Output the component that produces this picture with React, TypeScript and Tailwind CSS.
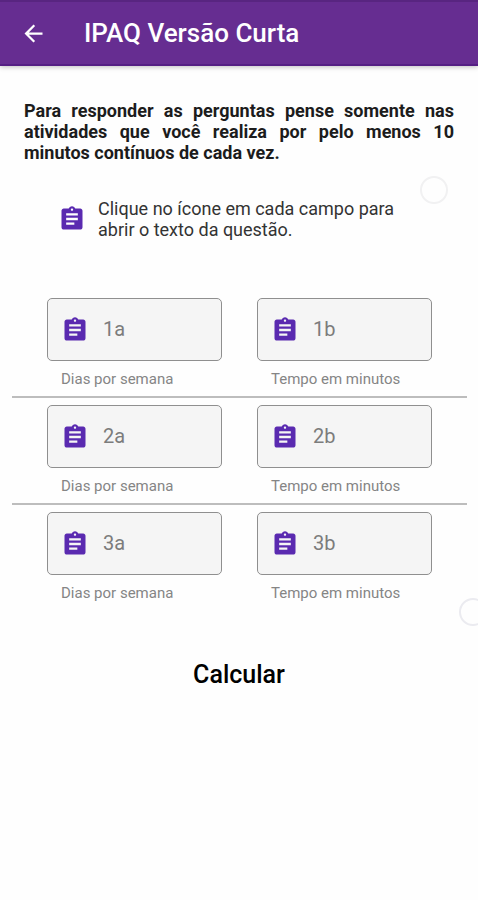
import { MdArrowBack, MdAssignment } from 'react-icons/md';

const questions = ['1', '2', '3'];

function Field({ id, label, helper }: { id: string; label: string; helper: string }) {
  return (
    <div className="min-w-0">
      <div className="flex h-[63px] items-center rounded-[5px] border border-[#8f8f8f] bg-[#f5f5f5] pl-[13px]">
        <button type="button" aria-label={`Abrir questão ${label}`} className="shrink-0 text-[#5a2ab0]">
          <MdAssignment size={28} />
        </button>
        <input
          id={id}
          type="text"
          inputMode="numeric"
          aria-label={label}
          placeholder={label}
          className="ml-[14px] w-full min-w-0 bg-transparent pb-0.5 text-xl text-[#333] outline-none placeholder:text-[#7c7c7c]"
        />
      </div>
      <label htmlFor={id} className="block pt-2 pl-[14px] text-[15px] leading-5 text-[#858585]">
        {helper}
      </label>
    </div>
  );
}

export default function App() {
  return (
    <div className="relative min-h-screen overflow-x-hidden bg-[#fefefe] font-['Roboto',sans-serif]">
      <header className="flex h-[66px] items-center border-t-2 border-b-2 border-t-[#582580] border-b-[#551f84] bg-[#662d91] pl-5 text-white shadow-[0_1px_5px_rgba(0,0,0,0.25)]">
        <button type="button" aria-label="Voltar">
          <MdArrowBack size={27} />
        </button>
        <h1 className="ml-[37px] text-[26px] leading-8 font-medium">IPAQ Versão Curta</h1>
      </header>

      <main className="pt-[34px]">
        <p className="px-6 text-justify text-lg leading-[21px] font-bold text-[#1c1c1c]">
          Para responder as perguntas pense somente nas atividades que você realiza por pelo menos 10
          minutos contínuos de cada vez.
        </p>

        <div className="mt-[35px] flex items-center pr-20 pl-[58px]">
          <MdAssignment size={28} className="shrink-0 text-[#5a2ab0]" />
          <p className="ml-3 text-lg leading-[21px] text-[#333]">
            Clique no ícone em cada campo para abrir o texto da questão.
          </p>
        </div>

        <form className="mt-[51px]">
          {questions.map((q, i) => (
            <div key={q}>
              {i > 0 && <hr className="mr-[11px] ml-3 border-t-2 border-[#bdbdbd]" />}
              <div className="grid grid-cols-2 gap-[35px] pt-[7px] pr-[46px] pb-[7px] pl-[47px]">
                <Field id={`dias-${q}`} label={`${q}a`} helper="Dias por semana" />
                <Field id={`tempo-${q}`} label={`${q}b`} helper="Tempo em minutos" />
              </div>
            </div>
          ))}
          <button type="button" className="mx-auto mt-[49px] block text-[25px] leading-8 font-medium text-black">
            Calcular
          </button>
        </form>
      </main>

      {/* Decorative bubbles floating over the page */}
      <span className="absolute top-44 right-[30px] size-7 rounded-full border-2 border-[#f1f1f2]" />
      <span className="absolute top-[598px] right-[-9px] size-7 rounded-full border-2 border-[#ebebf0]" />
    </div>
  );
}
